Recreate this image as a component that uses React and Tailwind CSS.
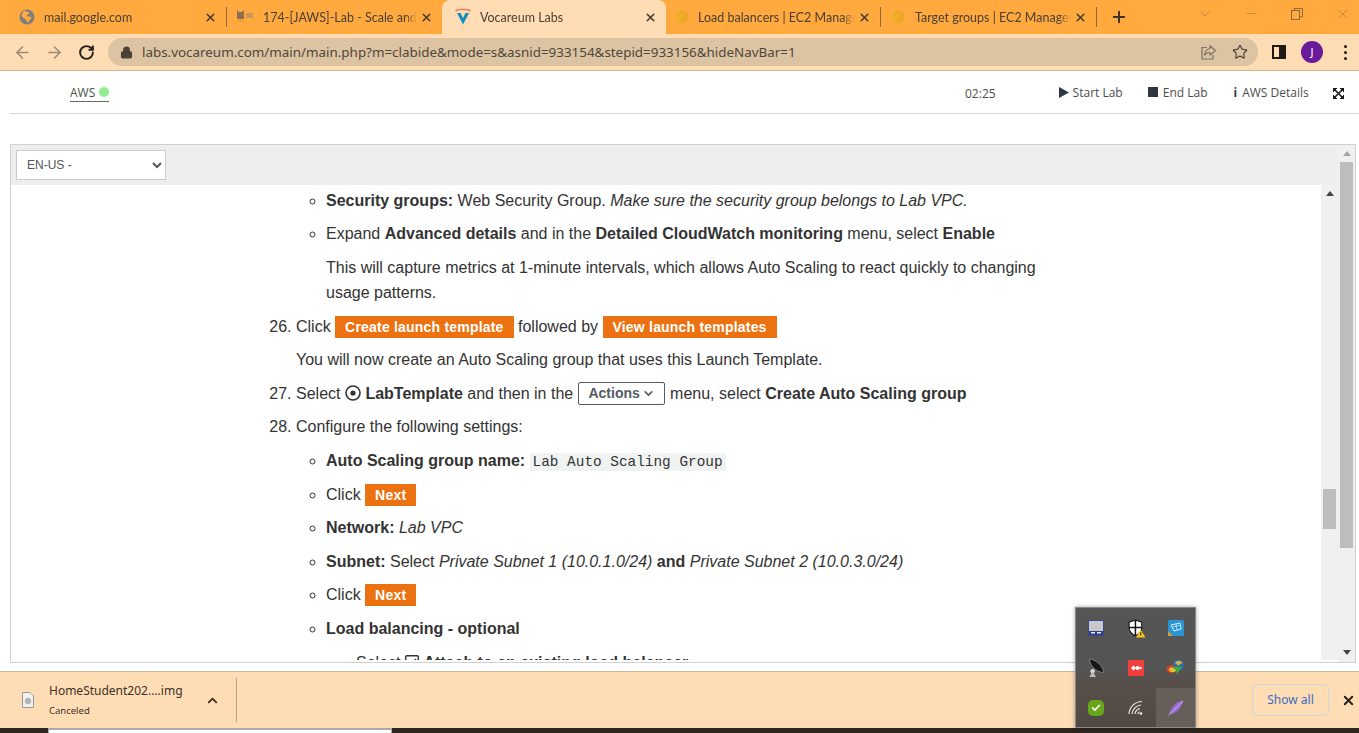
import React from "react";
import { X, Plus, ArrowLeft, ArrowRight, RotateCw, Lock, Star, ChevronDown, ChevronUp, Minus, Check } from "lucide-react";

const Globe = () => (
  <svg width="16" height="16" viewBox="0 0 16 16" className="shrink-0">
    <circle cx="8" cy="8" r="7.5" fill="#7d7d80" />
    <path d="M5 1.5 C7 3 9 2.5 10.5 3.5 C10.5 5 8 5.5 7.5 6.5 C8.5 8 11 7 12.5 8.5 C12 10.5 10 11 9.5 13 C8 14.5 7.5 12 7 10.5 C5.5 10 3.5 8.5 2.5 6.5 C3 4.5 4 3 5 1.5Z" fill="#ffa93f" />
  </svg>
);
const Jaws = () => (
  <svg width="18" height="20" viewBox="0 0 18 20" className="shrink-0">
    <path d="M1 3 L3 5 L6 5 L8 3 L8 12 L1 12Z" fill="#8b6f4e" />
    <rect x="10" y="6" width="7" height="5" fill="#c69757" />
    <path d="M1.5 13 A4 4 0 0 0 8 13Z" fill="#f59322" />
  </svg>
);
const Voc = () => (
  <svg width="18" height="18" viewBox="0 0 18 18" className="shrink-0">
    <path d="M1 2 Q9 -1 17 2 L16 3.4 Q9 .8 2 3.4Z" fill="#ec7a55" />
    <path d="M3 5 L15 5 L9 16.5Z" fill="#0f8fc4" />
    <path d="M6.5 5 L11.5 5 L9 10Z" fill="#fedcb4" />
  </svg>
);
const Cube = () => (
  <svg width="16" height="16" viewBox="0 0 16 16" className="shrink-0">
    <path d="M2 4 L8 1.5 L14 4 L14 12.5 L8 15 L2 12.5Z" fill="#eca826" />
    <path d="M8 4.5 L8 15 L2 12.5 L2 4Z" fill="#f0ae2a" />
  </svg>
);

const Tab = ({ icon, title, wClass, plClass, gapClass, active }) => (
  <div className={`${wClass} ${plClass} h-[34px] flex items-center pr-[9px] shrink-0 ${active ? "bg-[#fedcb4] rounded-t-[8px]" : ""}`}>
    <span className="w-[16px] flex justify-center shrink-0">{icon}</span>
    <span className={`${gapClass} flex-1 min-w-0 overflow-hidden whitespace-nowrap text-[12.5px] leading-[16px] mt-[1px] text-[#4b4033] [mask-image:linear-gradient(to_right,black_92%,transparent)]`} style={{ fontFamily: "'Lato', sans-serif" }}>
      {title}
    </span>
    <X size={13} strokeWidth={3} className="text-[#4a3f33] shrink-0 ml-[3px]" />
  </div>
);
const Sep = () => <div className="w-px h-[20px] bg-[#8d6a3c] shrink-0" />;

const Btn = ({ children }) => (
  <span className="inline-block bg-[#ec7211] text-white font-bold text-[14px] leading-[22px] px-[10px] align-baseline tracking-[0.2px]">{children}</span>
);

const Row = ({ children }) => <p className="mb-[8.6px] h-[25px] leading-[25px]">{children}</p>;

function TrayIcons() {
  return [
    <svg key="1" width="16" height="16" viewBox="0 0 16 16"><rect x=".5" y=".5" width="15" height="15" fill="#c9c9c9" stroke="#3b4a8e" /><rect x="1" y="11" width="14" height="4" fill="#2c3a8a" /><rect x="3" y="12" width="4" height="1.6" fill="#dfe3f5" /><rect x="9" y="12" width="4" height="1.6" fill="#dfe3f5" /></svg>,
    <svg key="2" width="19" height="19" viewBox="0 0 18 18"><path d="M8 1 L14 3 L14 8 C14 12 11 14.5 8 16 C5 14.5 2 12 2 8 L2 3Z" fill="#fff" stroke="#111" /><path d="M8 1 L8 16 M2 8 L14 8" stroke="#111" strokeWidth="1.4" /><path d="M13 10 L17.5 17.5 L8.5 17.5Z" fill="#f7c518" /><rect x="12.6" y="12.5" width="1" height="3" fill="#222" /></svg>,
    <svg key="3" width="16" height="16" viewBox="0 0 16 16"><rect width="16" height="16" rx="1.5" fill="#2b95d3" /><path d="M0 11 L5 16 L0 16Z" fill="#d79a3a" /><path d="M3 5 L12 3 L13 9 L6 11Z" fill="none" stroke="#d6eefc" /><path d="M5 7 L11 5.5 M8 3.5 L9 10" stroke="#d6eefc" strokeWidth=".7" /></svg>,
    <svg key="4" width="20" height="20" viewBox="0 0 18 18"><path d="M3 1 C9 1.5 15 7 16 13 C10 13 4 8 3 1Z" fill="#161616" stroke="#999" strokeWidth=".6" /><circle cx="6" cy="12" r="2" fill="#ddd" /><path d="M3 17 L6 12 L9 17Z" fill="#bbb" /></svg>,
    <svg key="5" width="16" height="16" viewBox="0 0 16 16"><rect width="16" height="16" fill="#f1403c" /><path d="M3 8 L5.5 5.5 L8 8 L5.5 10.5Z" fill="#fff" /><circle cx="9.5" cy="8" r="2" fill="#fff" /><circle cx="12.5" cy="8" r="1.2" fill="#fff" /></svg>,
    <svg key="6" width="20" height="18" viewBox="0 0 18 16"><circle cx="11" cy="5.5" r="5" fill="#2f6db5" /><path d="M8 3 A5 5 0 0 1 15 3 L11 6Z" fill="#d8b33b" /><ellipse cx="5" cy="9" rx="4.5" ry="3.6" fill="#d7422c" /><ellipse cx="6" cy="9.5" rx="3.2" ry="2.2" fill="#e9c030" /><path d="M5 7 L15 7 L12 10 L10 14 L9 10Z" fill="#3cae3c" /></svg>,
    <div key="7" className="w-[16px] h-[16px] bg-[#6aa61c] rounded-[5px] flex items-center justify-center"><Check size={10} strokeWidth={4} className="text-white" /></div>,
    <svg key="8" width="16" height="16" viewBox="0 0 16 16" fill="none" stroke="#e8e8e8" strokeWidth="1.2"><path d="M1 14 A13 13 0 0 1 14 1.5" /><path d="M4 14 A10 10 0 0 1 13 5" /><path d="M7 14 A6.5 6.5 0 0 1 12 8.5" /><path d="M9.8 14 A3.5 3.5 0 0 1 11.5 11.7" /><circle cx="13" cy="13.5" r="1.2" fill="#fff" stroke="none" /></svg>,
    <svg key="9" width="16" height="16" viewBox="0 0 16 16"><path d="M15.5 .5 C9 1.5 3.5 6 1 14 C7 14 13 10 15.5 .5Z" fill="#9a6cd8" /><path d="M15 1 L.5 15.5" stroke="#e7d8fb" strokeWidth=".6" /></svg>,
  ];
}

export default function App() {
  const tray = TrayIcons();
  return (
    <div className="relative w-[1359px] h-[733px] overflow-hidden flex flex-col bg-white" style={{ fontFamily: "'Liberation Sans', Arial, sans-serif" }}>
      {/* tab strip */}
      <div className="h-[34px] bg-[#ffa93f] flex items-center shrink-0">
        <Tab icon={<Globe />} title="mail.google.com" wClass="w-[226px]" plClass="pl-[19px]" gapClass="ml-[9px]" />
        <Sep />
        <Tab icon={<Jaws />} title="174-[JAWS]-Lab - Scale and Load Balance" wClass="w-[215px]" plClass="pl-[10px]" gapClass="ml-[10px]" />
        <Tab icon={<Voc />} title="Vocareum Labs" wClass="w-[224px]" plClass="pl-[13px]" gapClass="ml-[9px]" active />
        <Tab icon={<Cube />} title="Load balancers | EC2 Management Console" wClass="w-[214px]" plClass="pl-[8px]" gapClass="ml-[8px]" />
        <Sep />
        <Tab icon={<Cube />} title="Target groups | EC2 Management Console" wClass="w-[215px]" plClass="pl-[9px]" gapClass="ml-[9px]" />
        <Sep />
        <Plus size={18} strokeWidth={2.6} className="text-[#3c3328] ml-[13px] shrink-0" />
        <ChevronDown size={16} strokeWidth={1} className="text-[#a57a40] ml-[69px] mb-[7px] shrink-0" />
        <Minus size={15} strokeWidth={1} className="text-[#a57a40] ml-[31px] mb-[7px] shrink-0" />
        <svg width="12" height="12" viewBox="0 0 12 12" fill="none" stroke="#8a6a3e" className="ml-[32px] mb-[7px] shrink-0"><rect x=".5" y="2.5" width="8" height="9" /><path d="M3 2.5 V.5 H11.5 V9 H8.5" /></svg>
        <X size={16} strokeWidth={1} className="text-[#a57a40] ml-[32px] mb-[7px] shrink-0" />
      </div>

      {/* toolbar */}
      <div className="h-[37px] bg-[#fedcb4] border-b border-[#cdb596] flex items-center shrink-0">
        <ArrowLeft size={19} strokeWidth={2} className="text-[#9a8a76] ml-[13px] shrink-0" />
        <ArrowRight size={19} strokeWidth={2} className="text-[#9a8a76] ml-[13px] shrink-0" />
        <RotateCw size={17} strokeWidth={2.8} className="text-[#26221d] ml-[14px] shrink-0" />
        <div className="ml-[13px] w-[1150px] h-[28px] rounded-full bg-[#dcc3a2] flex items-center shrink-0">
          <Lock size={13} strokeWidth={2.6} className="text-[#4a4238] ml-[12px] shrink-0" fill="#4a4238" />
          <span className="ml-[9px] text-[13.4px] text-[#4f473c] whitespace-nowrap" style={{ fontFamily: "'Noto Sans', sans-serif" }}>labs.vocareum.com/main/main.php?m=clabide&amp;mode=s&amp;asnid=933154&amp;stepid=933156&amp;hideNavBar=1</span>
          <svg width="17" height="17" viewBox="0 0 17 17" fill="none" stroke="#7b7264" strokeWidth="1.2" className="ml-auto shrink-0"><path d="M7 3.5 H2 V15 H13 V11" /><path d="M10 2 L15.5 6.5 L10 11 V8.5 C7.5 8.5 5.5 9.5 4.5 11.5 C4.7 8 7 5 10 4.5Z" /></svg>
          <Star size={16} strokeWidth={1.8} className="text-[#4f473c] ml-[15px] mr-[10px] shrink-0" />
        </div>
        <div className="ml-[14px] w-[14px] h-[14px] border-[2px] border-[#1f1a15] flex justify-end shrink-0"><div className="w-[5px] bg-[#1f1a15]" /></div>
        <div className="ml-[15px] w-[22px] h-[22px] rounded-full bg-[#6a1b9a] text-white text-[11px] flex items-center justify-center shrink-0" style={{ fontFamily: "'Noto Sans', sans-serif" }}>J</div>
        <div className="ml-[21px] flex flex-col gap-[3px] shrink-0">
          <span className="w-[3px] h-[3px] rounded-full bg-[#1f1a15]" />
          <span className="w-[3px] h-[3px] rounded-full bg-[#1f1a15]" />
          <span className="w-[3px] h-[3px] rounded-full bg-[#1f1a15]" />
        </div>
      </div>

      {/* page */}
      <div className="flex-1 min-h-0 flex flex-col bg-white">
        <div className="h-[43px] ml-[10px] border-b border-[#d5d5d5] flex items-center text-[12px] text-[#4d4d4d] shrink-0" style={{ fontFamily: "'Open Sans', sans-serif" }}>
          <div className="ml-[60px] h-[19px] mt-[1px] flex items-center gap-[4px] border-b border-[#666] w-[39px]">
            <span className="leading-[15px]">AWS</span>
            <span className="w-[10px] h-[10px] rounded-full bg-[#90ee90] shrink-0" />
          </div>
          <span className="ml-[856px] mt-[3px]">02:25</span>
          <svg width="10" height="11" viewBox="0 0 10 11" className="ml-[63px] shrink-0"><path d="M0 0 L10 5.5 L0 11Z" fill="#2f3640" /></svg>
          <span className="ml-[4px] mt-[2px]">Start Lab</span>
          <span className="ml-[25px] w-[10px] h-[10px] bg-[#2f3640] shrink-0" />
          <span className="ml-[5px] mt-[2px]">End Lab</span>
          <span className="ml-[26px] mt-[2px] font-bold text-[#2f3640]">i</span>
          <span className="ml-[5px] mt-[2px]">AWS Details</span>
          <svg width="11" height="11" viewBox="0 0 11 11" className="ml-[24px] mt-[2px] shrink-0" fill="#1c1c1c" stroke="#1c1c1c"><path d="M0 0 H4 L0 4Z M11 0 V4 L7 0Z M0 11 V7 L4 11Z M11 11 H7 L11 7Z" /><path d="M1 1 L10 10 M10 1 L1 10" strokeWidth="1.6" /></svg>
        </div>

        <div className="ml-[10px] mt-[30px] w-[1346px] h-[519px] border border-[#d0d0d0] flex shrink-0">
          <div className="flex-1 min-w-0 flex flex-col">
            <div className="h-[40px] bg-[#eeeeee] pt-[5px] pl-[5px] shrink-0">
              <select className="w-[150px] h-[30px] bg-white border border-[#ccc] pl-[6px] text-[12px] text-[#555]">
                <option>EN-US -</option>
              </select>
            </div>
            <div className="flex-1 min-h-0 flex">
              <div className="flex-1 min-w-0 h-[475px] overflow-hidden pt-[2.8px] text-[16px] text-[#333]">
                <ul className="list-[circle] ml-[315px] w-[714px]">
                  <li><Row><b>Security groups:</b> Web Security Group. <i>Make sure the security group belongs to Lab VPC.</i></Row></li>
                  <li>
                    <Row>Expand <b>Advanced details</b> and in the <b>Detailed CloudWatch monitoring</b> menu, select <b>Enable</b></Row>
                    <p className="mb-[8.6px] leading-[25px]">This will capture metrics at 1-minute intervals, which allows Auto Scaling to react quickly to changing usage patterns.</p>
                  </li>
                </ul>
                <ol start={26} className="list-decimal ml-[285px]">
                  <li>
                    <Row>Click <Btn>Create launch template</Btn> followed by <Btn>View launch templates</Btn></Row>
                    <Row>You will now create an Auto Scaling group that uses this Launch Template.</Row>
                  </li>
                  <li>
                    <Row>
                      Select <svg width="16" height="16" viewBox="0 0 16 16" fill="none" className="inline align-[-2px]"><circle cx="8" cy="8" r="7" stroke="#333" strokeWidth="1.6" /><circle cx="8" cy="8" r="2.6" fill="#333" /></svg> <b>LabTemplate</b> and then in the{" "}
                      <span className="inline-flex items-center justify-center w-[87px] h-[23px] mr-[1px] pl-[1px] border border-[#545b64] rounded-[2px] text-[#545b64] font-bold text-[14px] align-middle mb-[2px]">Actions<ChevronDown size={13} strokeWidth={3} className="ml-[2px]" /></span>{" "}
                      menu, select <b>Create Auto Scaling group</b>
                    </Row>
                  </li>
                  <li>
                    <Row>Configure the following settings:</Row>
                    <ul className="list-[circle] ml-[30px] mt-[1.5px]">
                      <li><Row><b>Auto Scaling group name:</b> <code className="bg-[#f1f3f3] rounded-[2px] px-[3px] py-[1px] text-[14.4px]" style={{ fontFamily: "'Liberation Mono', monospace" }}>Lab Auto Scaling Group</code></Row></li>
                      <li><Row>Click <Btn>Next</Btn></Row></li>
                      <li><Row><b>Network:</b> <i>Lab VPC</i></Row></li>
                      <li><Row><b>Subnet:</b> Select <i>Private Subnet 1 (10.0.1.0/24)</i> <b>and</b> <i>Private Subnet 2 (10.0.3.0/24)</i></Row></li>
                      <li><Row>Click <Btn>Next</Btn></Row></li>
                      <li>
                        <Row><b>Load balancing - optional</b></Row>
                        <ul className="list-none ml-[30px]">
                          <li><Row>Select <svg width="14" height="14" viewBox="0 0 14 14" fill="none" stroke="#333" strokeWidth="1.4" className="inline align-[-1px]"><rect x=".7" y=".7" width="12.6" height="12.6" rx="1" /><path d="M3 7 L6 10 L11 4" /></svg> <b>Attach to an existing load balancer</b></Row></li>
                        </ul>
                      </li>
                    </ul>
                  </li>
                </ol>
              </div>
              {/* inner scrollbar */}
              <div className="w-[17px] h-[475px] bg-[#f0f0f0] shrink-0 flex flex-col items-center">
                <div className="mt-[6px] w-0 h-0 border-x-[4px] border-x-transparent border-b-[5px] border-b-[#444]" />
                <div className="mt-[293px] w-[13px] h-[40px] bg-[#bdbdbd]" />
              </div>
            </div>
          </div>
          {/* outer scrollbar */}
          <div className="w-[17px] bg-[#f0f0f0] shrink-0 flex flex-col items-center">
            <div className="mt-[6px] w-0 h-0 border-x-[4px] border-x-transparent border-b-[5px] border-b-[#a5a5a5]" />
            <div className="mt-[6px] w-[13px] h-[386px] bg-[#bdbdbd]" />
            <div className="mt-auto mb-[7px] w-0 h-0 border-x-[4px] border-x-transparent border-t-[5px] border-t-[#444]" />
          </div>
        </div>
      </div>

      {/* download shelf */}
      <div className="h-[57px] bg-[#fedcb4] border-t border-[#cdb596] flex items-center shrink-0">
        <svg width="12" height="16" viewBox="0 0 12 16" className="ml-[22px] shrink-0"><path d="M.5 .5 H8 L11.5 4 V15.5 H.5Z" fill="#f2f2f2" stroke="#9a9a9a" /><circle cx="6" cy="9" r="3.2" fill="#b5b5b5" /></svg>
        <div className="ml-[15px] w-[156px] shrink-0" style={{ fontFamily: "'Noto Sans', sans-serif" }}>
          <div className="text-[12px] leading-[16px] text-[#3c3229]">HomeStudent202....img</div>
          <div className="text-[9.5px] leading-[12px] mt-[6px] text-[#3c3229]">Canceled</div>
        </div>
        <ChevronUp size={15} strokeWidth={3} className="text-[#3c3229] shrink-0" />
        <div className="ml-[16px] w-px h-[44px] bg-[#b9a283] shrink-0" />
        <div className="ml-auto w-[77px] h-[32px] border border-[#cfd6e0] rounded-[4px] flex items-center justify-center text-[12px] text-[#3b6fc4] shrink-0" style={{ fontFamily: "'Noto Sans', sans-serif" }}>Show all</div>
        <X size={15} strokeWidth={3} className="text-[#26221d] ml-[12px] mr-[3px] shrink-0" />
      </div>

      {/* OS taskbar sliver */}
      <div className="h-[5px] bg-[#2e2620] shrink-0 flex">
        <div className="ml-[48px] w-[344px] bg-white border-t-[2px] border-x border-[#aaaaaa]" />
      </div>

      {/* system tray flyout */}
      <div className="absolute left-[1075px] top-[607px] w-[121px] h-[121px] border border-[#8a8a8a] grid grid-cols-[40px_40px_39px] grid-rows-[40px_40px_39px] bg-[linear-gradient(to_bottom,#565656_0%,#545454_50%,#57504a_62%,#514a44_100%)] shadow-[0_0_4px_rgba(0,0,0,0.35)]">
        {tray.map((icon, i) => (
          <div key={i} className={`flex items-center justify-center ${i === 8 ? "bg-[#665f59]" : ""}`}>{icon}</div>
        ))}
      </div>
    </div>
  );
}
